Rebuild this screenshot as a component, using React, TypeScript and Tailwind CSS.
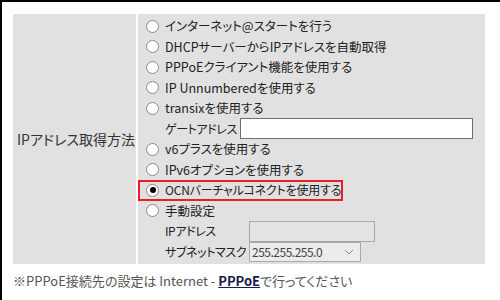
import React from "react";

const font = "font-['Noto_Sans_CJK_JP','Noto_Sans',sans-serif] [font-feature-settings:'palt']";

function Radio({ checked = false }: { checked?: boolean }) {
  return (
    <span className="w-[13px] h-[13px] rounded-full border border-[#8a8a8a] bg-white flex items-center justify-center shrink-0">
      {checked && <span className="w-[6px] h-[6px] rounded-full bg-black" />}
    </span>
  );
}

function RadioRow({ label, checked = false }: { label: string; checked?: boolean }) {
  return (
    <div className="h-[20.5px] flex items-center pl-[8px] gap-[6px]">
      <Radio checked={checked} />
      <span className="text-[12.5px] leading-none text-[#222] whitespace-nowrap">{label}</span>
    </div>
  );
}

function SubRow({ label, w, children }: { label: string; w: string; children: React.ReactNode }) {
  return (
    <div className="h-[20.5px] flex items-center pl-[27px]">
      <span className={`${w} shrink-0 text-[12px] leading-none text-[#222] whitespace-nowrap tracking-[-0.4px]`}>{label}</span>
      {children}
    </div>
  );
}

export default function App() {
  return (
    <div className={`w-[500px] h-[300px] bg-white border-t-2 border-l-2 border-black overflow-hidden ${font}`}>
      <div className="pt-[12px] pl-[11px]">
        <div className="flex w-[472px] h-[250px] bg-[#e1e1e1]">
          <div className="w-[123px] flex items-center pl-[4px]">
            <span className="text-[14px] leading-none text-[#333] whitespace-nowrap">IPアドレス取得方法</span>
          </div>
          <div className="w-[2px] bg-white" />
          <div className="flex-1 pt-[2px]">
            <RadioRow label="インターネット@スタートを行う" />
            <RadioRow label="DHCPサーバーからIPアドレスを自動取得" />
            <RadioRow label="PPPoEクライアント機能を使用する" />
            <RadioRow label="IP Unnumberedを使用する" />
            <RadioRow label="transixを使用する" />
            <SubRow label="ゲートアドレス" w="w-[75px]">
              <input
                type="text"
                className="w-[233px] h-[21px] bg-white border border-[#6e6e6e] outline-none"
              />
            </SubRow>
            <RadioRow label="v6プラスを使用する" />
            <RadioRow label="IPv6オプションを使用する" />
            <div className="h-[20.5px] flex items-center">
              <div className="w-[205px] h-[21px] border-2 border-[#ee1c25] flex items-center pl-[6px] gap-[6px]">
                <Radio checked />
                <span className="text-[12px] leading-none text-[#222] whitespace-nowrap tracking-[-0.2px]">OCNバーチャルコネクトを使用する</span>
              </div>
            </div>
            <RadioRow label="手動設定" />
            <SubRow label="IPアドレス" w="w-[84px]">
              <div className="w-[126px] h-[21px] bg-[#e3e3e3] border border-[#a9a9a9]" />
            </SubRow>
            <SubRow label="サブネットマスク" w="w-[84px]">
              <div className="w-[112px] h-[20px] bg-[#ececec] border border-[#a9a9a9] flex items-center justify-between pl-[2px] pr-[6px]">
                <span className="text-[12px] leading-none text-[#444] tracking-[-0.5px]">255.255.255.0</span>
                <svg width="10" height="6" viewBox="0 0 10 6">
                  <path d="M1 1 L5 5 L9 1" fill="none" stroke="#888" strokeWidth="1" />
                </svg>
              </div>
            </SubRow>
          </div>
        </div>
        <div className="mt-[9px] text-[13px] leading-[16px] text-[#555] whitespace-nowrap">
          ※PPPoE接続先の設定は Internet -{" "}
          <span className="font-bold text-[#1b1b4b] underline">PPPoE</span>で行ってください
        </div>
      </div>
    </div>
  );
}
